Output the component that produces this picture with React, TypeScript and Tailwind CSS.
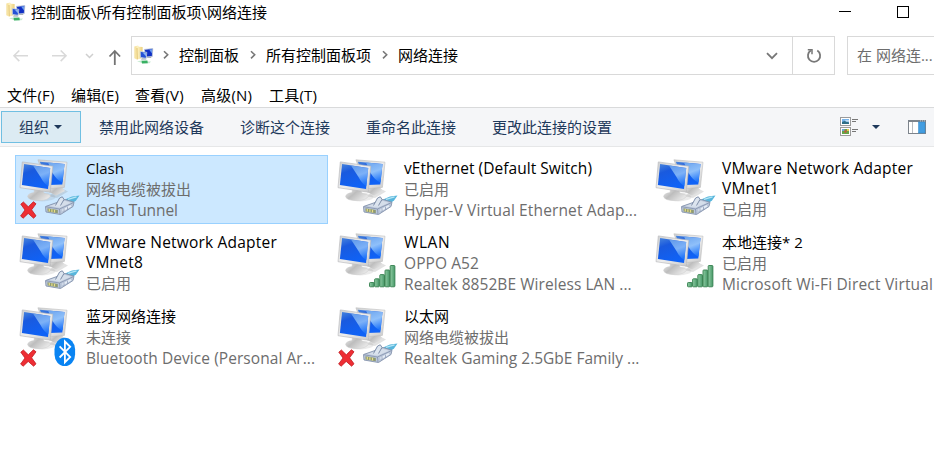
import type { ReactNode } from "react";

type Badge = "cable" | "wifi" | "bluetooth";

interface Connection {
  name: ReactNode;
  nameStyle?: string;
  lines: { text: string; style?: string }[];
  badge: Badge;
  disconnected?: boolean;
  selected?: boolean;
}

const connections: Connection[] = [
  { name: "Clash", lines: [{ text: "网络电缆被拔出" }, { text: "Clash Tunnel", style: "text-[15.5px] tracking-[-0.08px]" }], badge: "cable", disconnected: true, selected: true },
  { name: "vEthernet (Default Switch)", nameStyle: "text-[15.5px] tracking-[0.04px]", lines: [{ text: "已启用" }, { text: "Hyper-V Virtual Ethernet Adap...", style: "text-[15.5px] tracking-[0.13px]" }], badge: "cable" },
  { name: <>VMware Network Adapter<br />VMnet1</>, nameStyle: "text-[15.5px] tracking-[0.2px]", lines: [{ text: "已启用" }], badge: "cable" },
  { name: <>VMware Network Adapter<br />VMnet8</>, nameStyle: "text-[15.5px] tracking-[0.2px]", lines: [{ text: "已启用" }], badge: "cable" },
  { name: "WLAN", nameStyle: "text-[15.5px] tracking-[0.6px]", lines: [{ text: "OPPO A52", style: "text-[15.5px] tracking-[0.08px]" }, { text: "Realtek 8852BE Wireless LAN ...", style: "text-[15.5px] tracking-[0.06px]" }], badge: "wifi" },
  { name: "本地连接* 2", lines: [{ text: "已启用" }, { text: "Microsoft Wi-Fi Direct Virtual", style: "text-[15.5px] tracking-[0.18px]" }], badge: "wifi" },
  { name: "蓝牙网络连接", lines: [{ text: "未连接" }, { text: "Bluetooth Device (Personal Ar...", style: "text-[15.5px] tracking-[0.06px]" }], badge: "bluetooth", disconnected: true },
  { name: "以太网", lines: [{ text: "网络电缆被拔出" }, { text: "Realtek Gaming 2.5GbE Family ...", style: "text-[15.5px]" }], badge: "cable", disconnected: true },
];

function Gradients() {
  return (
    <svg width="0" height="0" className="absolute">
      <defs>
        <linearGradient id="screen" x1="0" y1="0" x2="0.4" y2="1">
          <stop offset="0" stopColor="#4a86dc" />
          <stop offset="0.35" stopColor="#1a5ade" />
          <stop offset="1" stopColor="#0f62f6" />
        </linearGradient>
        <linearGradient id="glare" x1="0.2" y1="0" x2="0.5" y2="1">
          <stop offset="0" stopColor="#6fa6ee" />
          <stop offset="0.5" stopColor="#8fc0fa" />
          <stop offset="1" stopColor="#2277fa" />
        </linearGradient>
        <linearGradient id="frame" x1="0" y1="0" x2="1" y2="1">
          <stop offset="0" stopColor="#cdcfd1" />
          <stop offset="0.5" stopColor="#eeeeee" />
          <stop offset="1" stopColor="#c9c9c9" />
        </linearGradient>
        <linearGradient id="base" x1="0" y1="0" x2="1" y2="0.6">
          <stop offset="0" stopColor="#f0f0f0" />
          <stop offset="0.45" stopColor="#bdbdbd" />
          <stop offset="1" stopColor="#e8e8e8" />
        </linearGradient>
        <linearGradient id="bar" x1="0" y1="0" x2="1" y2="0">
          <stop offset="0" stopColor="#8fcba2" />
          <stop offset="1" stopColor="#469868" />
        </linearGradient>
        <linearGradient id="folder" x1="0" y1="0" x2="1" y2="0">
          <stop offset="0" stopColor="#f3dc92" />
          <stop offset="0.4" stopColor="#fdf1c0" />
          <stop offset="1" stopColor="#ecd07c" />
        </linearGradient>
      </defs>
    </svg>
  );
}

function CableBadge() {
  return (
    <g strokeLinejoin="round">
      <path d="M50 44.5 L57 41.4 L64.5 40.4 L61 45.5 L57 48.5 Z" fill="#58b6dc" />
      <path d="M53 44.3 L61.5 41.8" stroke="#b5e6f5" strokeWidth="1.4" />
      <path d="M30.5 51.5 L42 47.5 L50 44.5 L59 47.2 L58 51.5 L45.5 59.5 L31 57 Z" fill="#bcc8db" stroke="#8593ad" strokeWidth="0.9" />
      <path d="M31 51.8 L44.5 54 L58.5 47.6" fill="none" stroke="#8390ab" strokeWidth="0.8" />
      <path d="M44.5 54 L45 59.2" stroke="#8390ab" strokeWidth="0.8" />
      <path d="M34.5 50.9 L49.5 45.8 L56 47.8 L44.5 52.7 Z" fill="#d5deea" />
      <path d="M40.5 50.5 L44.6 43 L47.3 41.8 L49 44.4 L45.5 50.5" fill="#dde5ef" stroke="#7484a2" strokeWidth="0.9" />
      <path d="M32.4 53.2 L42.8 55 L42.8 58.2 L32.6 56.4 Z" fill="#8f9a72" />
      <path d="M34.3 53.9 V56.4 M36.9 54.3 V56.9 M39.5 54.8 V57.4" stroke="#e9df86" strokeWidth="1.2" />
      <path d="M47.5 55.5 L56 50.8" stroke="#e6edf6" strokeWidth="1.7" />
      <path d="M49 53.5 V57 M52.5 51.8 V55" stroke="#8a98b3" strokeWidth="0.7" />
    </g>
  );
}

function WifiBadge() {
  const bars = [
    { x: 36.5, top: 53.5 },
    { x: 41.6, top: 49.8 },
    { x: 46.8, top: 45.6 },
    { x: 52, top: 41 },
    { x: 57.2, top: 36.5 },
  ];
  return (
    <g>
      {bars.map((b) => (
        <rect key={b.x} x={b.x} y={b.top} width="4.7" height={57.8 - b.top} rx="0.8" fill="url(#bar)" stroke="#35804f" strokeWidth="0.9" />
      ))}
    </g>
  );
}

function BluetoothBadge() {
  return (
    <g>
      <rect x="39.5" y="34.8" width="20.6" height="28.2" rx="10.3" ry="11.5" fill="#0a84f2" />
      <path d="M44.6 43.3 L55.2 54 L49.9 59.3 V38.5 L55.2 43.8 L44.6 54.5" fill="none" stroke="#fff" strokeWidth="1.8" />
    </g>
  );
}

function ConnectionIcon({ badge, disconnected }: { badge: Badge; disconnected?: boolean }) {
  return (
    <svg width="70" height="69" viewBox="0 0 70 69" className="-ml-px -mt-px shrink-0">
      <path d="M33 41 L48 34 L53 36.5 L42 43 Z" fill="#8a8a8a" opacity="0.25" />
      <path d="M38 31 L46 31 L50 36 L41 40.5 L34 37 Z" fill="url(#base)" />
      <path d="M22.9 4.8 L52 7.2 L49.4 32.4 L34 33.6 Z" fill="url(#frame)" stroke="#bdbdbd" strokeWidth="0.6" />
      <path d="M24.8 6.7 L49.5 8.9 L47.3 29.4 L34 30 Z" fill="url(#screen)" />
      <path d="M33 7.4 L49.5 8.9 L47.5 27.5 Q42 25.5 37.5 18 Z" fill="url(#glare)" />
      <ellipse cx="27" cy="42" rx="13.5" ry="4.4" fill="#777" opacity="0.15" />
      <path d="M19.5 34 L28 35.5 L29 38.3 Q35 39 35.6 41 Q33 45.6 24 45.6 Q13.5 45.6 12.6 41.5 Q13 38.5 19 37.6 Z" fill="url(#base)" stroke="#cacaca" strokeWidth="0.5" />
      <path d="M7.3 6.9 L37.8 11.2 L35.3 37.2 L5 32.7 Z" fill="url(#frame)" stroke="#b5b6b8" strokeWidth="0.6" />
      <path d="M9.1 9 L35.2 12.9 L33 34 L6.9 30.1 Z" fill="url(#screen)" />
      <path d="M18 10.4 L35.2 12.9 L33.4 31 Q29 29 25.5 22 Z" fill="url(#glare)" opacity="0.85" />
      {badge === "cable" && <CableBadge />}
      {badge === "wifi" && <WifiBadge />}
      {badge === "bluetooth" && <BluetoothBadge />}
      {disconnected && (
        <path
          d="M5.8 49.2 L8.4 47 L13.3 51.8 L18.4 46.8 L21 48.8 L16.6 54.8 L21 60.8 L18.6 63.2 L13.2 58.4 L8.2 63.2 L5.6 61 L10 55 Z"
          fill="#ee2e34"
          stroke="#c01c22"
          strokeWidth="0.8"
          strokeLinejoin="round"
        />
      )}
    </svg>
  );
}

function FolderIcon() {
  return (
    <svg width="20" height="20" viewBox="0 0 20 20" className="shrink-0">
      <path d="M0.4 1.4 L4 0.6 L4.8 1.8 L8.6 2 V13 L3 14.6 L0.4 13.2 Z" fill="url(#folder)" />
      <path d="M3 3 L3.3 14.4" stroke="#d9b355" strokeWidth="0.7" />
      <path d="M13.5 11.5 L16.5 11 L17.5 13 H13 Z" fill="#aab1ba" />
      <path d="M10.4 4.4 L18.8 3.6 L18.3 11.4 L11.4 12 Z" fill="#1030c4" stroke="#c3cbd8" strokeWidth="0.8" />
      <path d="M15.2 4.6 L18.2 4.3 L17.8 8.6 Z" fill="#6c9df0" />
      <path d="M8 13 H11.5 L12.5 14.8 H7 Z" fill="#b5bcc4" />
      <path d="M6.2 6.4 L12.8 7.4 L12.2 13.4 L6.4 12.4 Z" fill="#2451d6" stroke="#cdd5e0" strokeWidth="0.8" />
      <path d="M8.6 7.4 L12.2 7.9 L11.9 11.2 Z" fill="#8db5f3" />
      <path d="M3 16.2 L8 15.4 L9.5 16.4 H17 L15.5 18.2 H8.5 L6.5 17.6 Z" fill="#c8ead2" />
      <path d="M7.6 15.8 L13.4 15.6 L13.8 18.2 L8 18.4 Z" fill="#38b063" />
    </svg>
  );
}

function Chevron() {
  return (
    <svg width="6" height="10" viewBox="0 0 6 10" className="mb-[2px] shrink-0">
      <path d="M1 1.2 L4.7 4.8 L1 8.4" fill="none" stroke="#777" strokeWidth="1.6" />
    </svg>
  );
}

function TitleBar() {
  return (
    <header className="flex h-[36px] items-start">
      <div className="pl-[6px] pt-[2px]"><FolderIcon /></div>
      <h1 className="ml-[5px] mt-px text-[15px] font-normal leading-[22px]">控制面板\所有控制面板项\网络连接</h1>
      <div className="ml-auto flex pr-[25px] pt-[6px]">
        <svg width="12" height="12" viewBox="0 0 12 12"><path d="M0 5.5 H12" stroke="#000" /></svg>
        <svg width="12" height="12" viewBox="0 0 12 12" className="ml-[46px]"><rect x="0.5" y="0.5" width="11" height="11" fill="none" stroke="#000" /></svg>
      </div>
    </header>
  );
}

function NavBar() {
  return (
    <nav className="flex h-[39px]">
      <svg width="131" height="39" viewBox="0 0 131 39" className="shrink-0" fill="none">
        <path d="M28 19.8 H14 M19.3 14.5 L14 19.8 L19.3 25.1" stroke="#d9d9d9" strokeWidth="1.6" />
        <path d="M52 19.8 H66 M60.7 14.5 L66 19.8 L60.7 25.1" stroke="#d9d9d9" strokeWidth="1.6" />
        <path d="M86 18 L89.5 21.5 L93 18" stroke="#cfcfcf" strokeWidth="1.5" />
        <path d="M114.8 29 V15 M109.5 20.5 L114.8 15 L120.1 20.5" stroke="#737373" strokeWidth="1.8" />
      </svg>
      <div className="flex w-[704px] shrink-0 border border-[#d9d9d9]">
        <div className="flex flex-1 items-center text-[15px] leading-[22px]">
          <div className="mb-[2px] pl-[2px]"><FolderIcon /></div>
          <div className="pl-[9px]"><Chevron /></div>
          <span className="mb-[2px] ml-[10px]">控制面板</span>
          <div className="ml-[11px]"><Chevron /></div>
          <span className="mb-[2px] ml-[10px]">所有控制面板项</span>
          <div className="ml-[11px]"><Chevron /></div>
          <span className="mb-[2px] ml-[10px]">网络连接</span>
          <svg width="12" height="8" viewBox="0 0 12 8" className="ml-auto mr-[14px] mt-px">
            <path d="M1 1.2 L6 6.2 L11 1.2" fill="none" stroke="#777" strokeWidth="1.8" />
          </svg>
        </div>
        <div className="flex w-[42px] items-center justify-center border-l border-[#d9d9d9]">
          <svg width="16" height="16" viewBox="0 0 16 16" fill="none" stroke="#777" strokeWidth="1.8">
            <path d="M11.3 2.6 A6.1 6.1 0 1 1 4.8 2.6" />
            <path d="M1.8 1.8 H6 V6.2" strokeWidth="1.5" />
          </svg>
        </div>
      </div>
      <div className="ml-[12px] flex flex-1 items-center border border-r-0 border-[#d9d9d9] pl-[9px] text-[15px] leading-[22px] text-[#6d6d6d]">
        <span className="mb-[2px] whitespace-nowrap">在 网络连...</span>
      </div>
    </nav>
  );
}

function MenuBar() {
  return (
    <div className="flex h-[32px] items-center gap-[16px] pl-[7px] pt-[8px] text-[15px] leading-[20px] tracking-[0.2px]">
      <span className="w-[48px] whitespace-nowrap">文件(F)</span>
      <span className="w-[48px] whitespace-nowrap">编辑(E)</span>
      <span className="w-[50px] whitespace-nowrap">查看(V)</span>
      <span className="w-[52px] whitespace-nowrap">高级(N)</span>
      <span className="w-[50px] whitespace-nowrap">工具(T)</span>
    </div>
  );
}

function ViewIcon() {
  return (
    <svg width="19" height="20" viewBox="0 0 19 20">
      <rect x="0.5" y="0.5" width="10" height="8" fill="#fff" stroke="#9b9b9b" />
      <rect x="2" y="2" width="7" height="5" fill="#79b4ea" />
      <path d="M2 5 L4.5 4 L9 5.5 V7 H2 Z" fill="#2f6f86" />
      <path d="M5 3.2 H9 V4.4 H6 Z" fill="#d8ebf8" />
      <rect x="0.5" y="10.5" width="10" height="8" fill="#fff" stroke="#9b9b9b" />
      <rect x="2" y="12" width="7" height="5" fill="#67a548" />
      <path d="M2 12 H4.5 V14 H2 Z" fill="#6fa6d8" />
      <path d="M4.5 13.5 H6.5 V15.5 H4.5 Z" fill="#d9473a" />
      <path d="M7 12 H9 V14 H7 Z" fill="#e8c64a" />
      <path d="M12 2.5 H18 M12 4.5 H16 M12 12.5 H18 M12 14.5 H16" stroke="#777" />
    </svg>
  );
}

function Toolbar() {
  return (
    <div className="flex h-[40px] items-center border-y border-t-[#d9dadb] border-b-[#e6e7e8] bg-[#f5f6f8] text-[15px] leading-[20px] text-[#1e395b]">
      <button className="ml-[1px] flex h-[32px] w-[80px] items-center border border-[#70bfe2] bg-[#dcebf3] pl-[17px]">
        组织
        <svg width="8" height="4" viewBox="0 0 8 4" className="ml-[5px]"><path d="M0 0 H8 L4 4 Z" fill="#1e395b" /></svg>
      </button>
      <span className="ml-[18px]">禁用此网络设备</span>
      <span className="ml-[36px]">诊断这个连接</span>
      <span className="ml-[36px]">重命名此连接</span>
      <span className="ml-[36px]">更改此连接的设置</span>
      <div className="ml-auto flex items-center pr-[8px]">
        <ViewIcon />
        <svg width="8" height="4" viewBox="0 0 8 4" className="ml-[13px]"><path d="M0 0 H8 L4 4 Z" fill="#1e395b" /></svg>
        <svg width="18" height="14" viewBox="0 0 18 14" className="ml-[28px]">
          <rect x="0.5" y="0.5" width="17" height="13" fill="#fff" stroke="#7d848c" />
          <path d="M0 1 H18" stroke="#7d848c" strokeWidth="2" />
          <path d="M12 1 H13 M14 1 H15 M16 1 H17" stroke="#d5d8db" />
          <path d="M4.5 2 V13" stroke="#b9bdc2" />
          <rect x="10.5" y="2" width="6.5" height="11" fill="#439de0" stroke="#2f86c9" strokeWidth="0.5" />
        </svg>
      </div>
    </div>
  );
}

function ConnectionTile({ item }: { item: Connection }) {
  const frame = item.selected ? "border-[#99d1ff] bg-[#cce8ff]" : "border-transparent";
  return (
    <li className={`flex h-[69px] w-[313px] border ${frame}`}>
      <ConnectionIcon badge={item.badge} disconnected={item.disconnected} />
      <div className="ml-px whitespace-nowrap pt-[2px]">
        <div className={`mb-px leading-[20px] ${item.nameStyle ?? "text-[15px]"}`}>{item.name}</div>
        {item.lines.map((line) => (
          <div key={line.text} className={`leading-[21px] text-[#6d6d6d] ${line.style ?? "text-[15px]"}`}>{line.text}</div>
        ))}
      </div>
    </li>
  );
}

export default function App() {
  return (
    <main className="h-[471px] w-[934px] overflow-hidden bg-white font-['Open_Sans','Noto_Sans_CJK_SC',sans-serif] text-black">
      <Gradients />
      <TitleBar />
      <NavBar />
      <MenuBar />
      <Toolbar />
      <ul className="grid w-[960px] grid-cols-[repeat(3,313px)] gap-x-[5px] gap-y-[5px] pl-[15px] pt-[8px]">
        {connections.map((item, index) => (
          <ConnectionTile key={index} item={item} />
        ))}
      </ul>
    </main>
  );
}
